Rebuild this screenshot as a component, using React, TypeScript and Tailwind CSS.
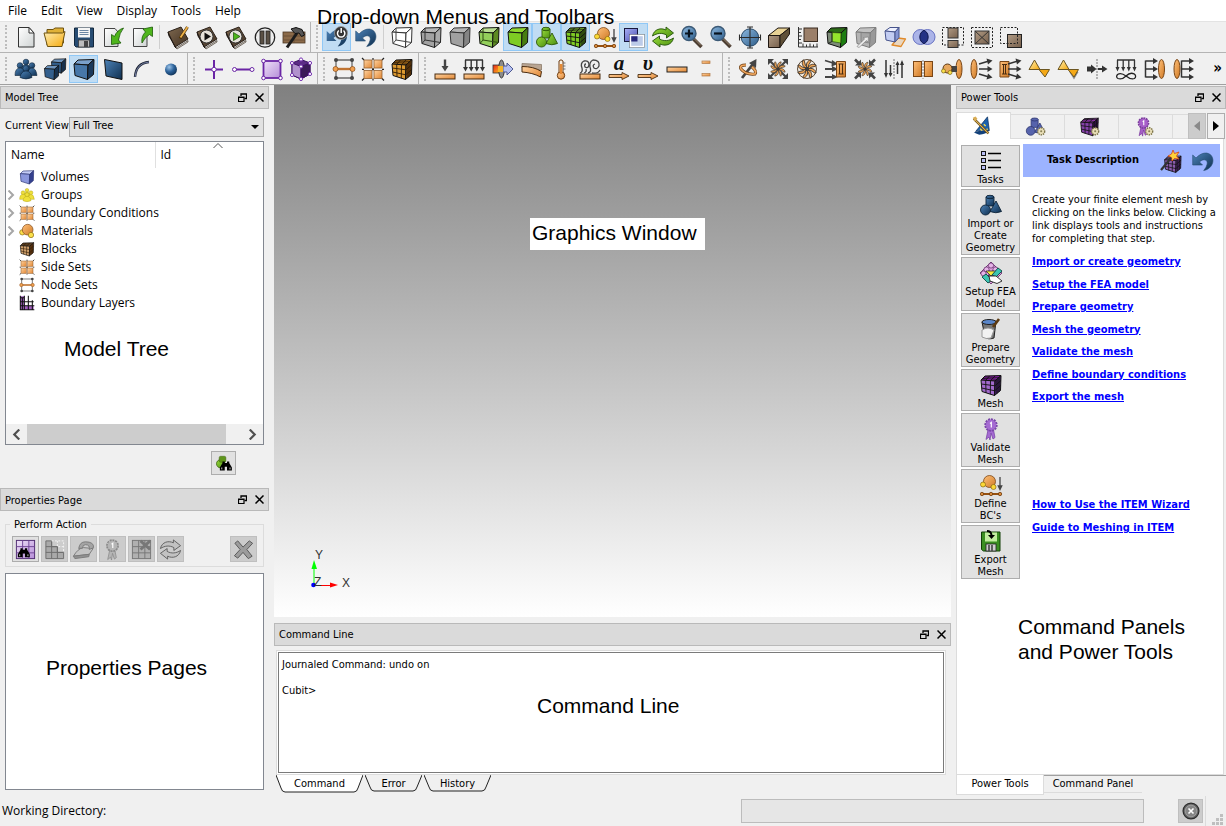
import type { ReactNode } from "react"
import { clsx } from "clsx"

function Cube({ top, front, side, stroke = "#111" }: { top: string; front: string; side: string; stroke?: string }) {
  return (
    <g stroke={stroke} strokeWidth="1" strokeLinejoin="round">
      <path d="M2 7L6 3L22 2.5L16 8z" fill={top} />
      <path d="M2 7L16 8L15.5 22.5L3 18.5z" fill={front} />
      <path d="M16 8L22 2.5L21.5 17.5L15.5 22.5z" fill={side} />
    </g>
  )
}

function MeshLines({ stroke = "#111" }: { stroke?: string }) {
  return (
    <path
      d="M6.7 7.3L7 20M11.5 7.7L11.3 21.3M2.3 11L16 12.8L22 7.5M2.7 15L15.7 17.8L21.7 12.5M18 6.2V20.5M20 4.3V19M3.5 5.5L18 6.2M5 4L20 4.3M10.5 3L6.7 7.3M16 3L11.5 7.7"
      stroke={stroke}
      strokeWidth="0.9"
      fill="none"
    />
  )
}

function Book() {
  return (
    <g strokeLinejoin="round">
      <path d="M2 7L15 2L22 14L9 22z" fill="url(#brown)" stroke="#2b2119" />
      <path d="M2 7L3 11L10 23L9 22" fill="#221a14" stroke="#221a14" />
      <path d="M10 23L22 15.5V17L11 24z" fill="#d8d2c8" stroke="#2b2119" strokeWidth="0.6" />
    </g>
  )
}

function Fan() {
  return (
    <g>
      {[0, 45, 90, 135, 180, 225, 270, 315].map((angle) => (
        <path
          key={angle}
          d="M12 10.5C10.5 7.5 12 3.5 16 3C16.5 5.5 13 6.5 13.3 10.5z"
          transform={`rotate(${angle} 12 12)`}
          fill="#eda354"
          stroke="#40362b"
          strokeWidth="0.9"
        />
      ))}
      <circle cx="12" cy="12" r="2" fill="#3a3a3a" />
    </g>
  )
}

function Gear() {
  return (
    <g>
      <circle cx="18.5" cy="17.5" r="4" fill="#e9dfb8" stroke="#7d7449" strokeWidth="1.6" strokeDasharray="1.6 1" />
      <circle cx="18.5" cy="17.5" r="1.2" fill="#8a8259" />
    </g>
  )
}

function Binoculars() {
  return (
    <g fill="#000">
      <path d="M8 10H11V12H14V10H17V12L20.5 18V22H14V17H11V22H4.5V18L8 12z" />
      <path d="M7 18V20.5M18 18V20.5" stroke="#fff" strokeWidth="1" />
    </g>
  )
}

const undoArrow = "M1.7 6V16H11.5L8.5 13C12 9.5 17 10 16.2 15Q15.5 18.5 12.7 21.5C19 20.5 22.7 15 21.8 10C20.5 3 12 1.500 5 9z"
const ribbon = (fill: string, stroke: string) => (
  <g fill={fill} stroke={stroke}>
    <path d="M9 13L7 22.5L10 20L11 23L12 16L14 22L16 20.5L14.5 13z" strokeWidth="0.8" />
    <circle cx="12" cy="8" r="5.5" strokeWidth="2.4" strokeDasharray="2 0.8" />
    <circle cx="12" cy="8" r="5" stroke="none" />
    <path d="M11 6.5L12.3 5.5V10.5" stroke="#fff" strokeWidth="1.2" fill="none" />
  </g>
)
const refresh = (fill: string, stroke: string) => (
  <g fill={fill} stroke={stroke} strokeWidth="0.9" strokeLinejoin="round">
    <path d="M1.5 11C3 4 10 2.5 15 5V2L22.5 8L15.5 13V10C11 7.5 6 8 1.5 11z" />
    <path d="M22.5 13C21 20 14 21.5 9 19V22L1.5 16L8.5 11V14C13 16.5 18 16 22.5 13z" />
  </g>
)
const boundary = (
  <g>
    <circle cx="10.5" cy="8.5" r="6" fill="url(#amber)" stroke="#7b4514" strokeWidth="0.8" />
    <circle cx="4" cy="11.5" r="2.5" fill="#fbd735" stroke="#8a6a10" strokeWidth="0.7" />
    <circle cx="14.5" cy="14" r="2.5" fill="#fbd735" stroke="#8a6a10" strokeWidth="0.7" />
    <path d="M21 4V15M19.3 13L21 16.5L22.7 13z" stroke="#444" strokeWidth="1.3" fill="#444" />
    <path d="M3 21H21" stroke="#96500f" strokeWidth="2" />
    <g fill="#d98a3a" stroke="#6e3a0a" strokeWidth="0.8">
      <circle cx="3" cy="21" r="1.7" />
      <circle cx="12" cy="21" r="1.7" />
      <circle cx="21" cy="21" r="1.7" />
    </g>
  </g>
)
const shapes = (fill: string, stroke: string) => (
  <g fill={fill} stroke={stroke} strokeWidth="0.9">
    <path d="M7 4v9h8V4z" />
    <ellipse cx="11" cy="4" rx="4" ry="1.7" />
    <path d="M17 8L22.5 18.5Q17 21 11 18.5z" />
    <circle cx="6.5" cy="17" r="5" />
  </g>
)
const sideSet = (
  <g>
    <path d="M1 1L3 3M23 1L21 3M1 23.5L3 21.5M23 23.5L21 21.5M12 1V3M12 21.5V23.5M1 12.300H3M21 12.300H23M11 12.300H13M12 11V13.500" stroke="#222" strokeWidth="1.2" />
    <g fill="url(#orange)" stroke="#94602f" strokeWidth="0.8">
      <rect x="3" y="3" width="8" height="8" />
      <rect x="13" y="3" width="8" height="8" />
      <rect x="3" y="13.5" width="8" height="8" />
      <rect x="13" y="13.5" width="8" height="8" />
    </g>
  </g>
)
const nodeSet = (
  <g>
    <path d="M4 3H20M4 21H20M4 3V21M20 3V21" stroke="#6a6a6a" strokeWidth="1.3" />
    <path d="M3 12H21" stroke="#c07432" strokeWidth="2.4" />
    <g fill="#444">
      <circle cx="4" cy="3" r="2" />
      <circle cx="20" cy="3" r="2" />
      <circle cx="4" cy="21" r="2" />
      <circle cx="20" cy="21" r="2" />
    </g>
    <g fill="#f0a050" stroke="#8a4a12" strokeWidth="0.7">
      <circle cx="3.5" cy="12" r="2.5" />
      <circle cx="20.5" cy="12" r="2.5" />
    </g>
  </g>
)
const people = (fill: string, stroke: string) => (
  <g fill={fill} stroke={stroke} strokeWidth="0.6">
    <circle cx="12" cy="5" r="2.8" />
    <path d="M7 14Q8 7.5 12 7.5T17 14z" />
    <circle cx="6" cy="8.5" r="2.8" />
    <circle cx="18" cy="8.5" r="2.8" />
    <path d="M1 18.5Q1 11 6 11T11 18.5z" />
    <path d="M13 18.5Q14 11 18 11T23 18.5z" />
    <circle cx="12" cy="11.5" r="3" />
    <path d="M6 20.5Q7 14 12 14T18 20.5Q12 23.5 6 20.5z" />
  </g>
)
const plate = <rect x="2" y="17" width="20" height="5" fill="url(#orange)" stroke="#4a2c10" />
const lens = (x: number) => <ellipse cx={x} cy="12" rx="3" ry="9.5" fill="url(#amber)" stroke="#7a4616" />
const magnifier = (sign: string) => (
  <g>
    <path d="M13.5 14L21.5 22" stroke="#4b3d31" strokeWidth="3.6" />
    <path d="M14.5 14L21 20.5" stroke="#9b866f" strokeWidth="1" />
    <circle cx="9" cy="8.5" r="7" fill="url(#sky)" stroke="#3c5a76" strokeWidth="1.4" />
    <path d={sign} stroke="#08131f" strokeWidth="2.2" />
  </g>
)
const outArrows = "M10 7L20 4M10 12H20M10 17L20 20"
const outHeads = "M17.5 1.5L23.5 3.5L19 7.5zM18.5 9L23.5 12L18.5 15zM19 16.5L23.5 20.5L17.5 22.5z"
const motionArrow = (
  <path d="M2 17.5H15V15.5L22 19L15 22.5V20.5H2z" fill="url(#orange)" stroke="#4a2c10" strokeWidth="0.9" />
)

const icons: Record<string, ReactNode> = {
  new: (
    <g stroke="#333" strokeLinejoin="round">
      <path d="M4.5 2.5H15L20 8V22H4.5z" fill="url(#paper)" />
      <path d="M15 2.5V8H20z" fill="#fff" />
    </g>
  ),
  open: (
    <g stroke="#6e5310" strokeLinejoin="round">
      <path d="M4 20V4.5H10L12 3H20.5V18z" fill="#e0b138" />
      <path d="M1 8H19.5L22 6.5L19 21.5H4.5z" fill="url(#gold)" />
    </g>
  ),
  save: (
    <g>
      <path d="M2.5 3H21.5V22H4L2.5 20.5z" fill="#274c73" stroke="#14283d" />
      <rect x="6" y="3" width="12" height="9.5" fill="#f5f5f5" />
      <path d="M7.5 5.5H16.5M7.5 7.5H16.5M7.5 9.5H16.5" stroke="#6b86a3" />
      <rect x="6.5" y="15" width="11" height="7" fill="#bcbcbc" stroke="#333" strokeWidth="0.7" />
      <rect x="12" y="16" width="4" height="6" fill="#444" />
    </g>
  ),
  import: (
    <g strokeLinejoin="round">
      <path d="M3.5 3.5H14L17 7V21.5H3.5z" fill="url(#paper)" stroke="#444" />
      <path d="M22.5 3Q16 5 13.5 11.5L10.5 9.5V19.5L20 18L17.5 15Q18.5 8 22.5 3z" fill="#4fb51c" stroke="#1c5a08" strokeWidth="0.8" />
    </g>
  ),
  export: (
    <g strokeLinejoin="round">
      <path d="M3.5 3.5H14L17 7V21.5H3.5z" fill="url(#paper)" stroke="#444" />
      <path d="M12 18Q11 11 15.5 7L13 4L22.5 2L22.5 11.5L19.5 9.5Q15 12 12 18z" fill="#4fb51c" stroke="#1c5a08" strokeWidth="0.8" />
    </g>
  ),
  journal: (
    <g>
      <Book />
      <path d="M21.5 2L14 13.5" stroke="#4e3205" strokeWidth="3" />
      <path d="M21.5 2L14.5 12.5" stroke="#eeb24a" strokeWidth="1.8" />
    </g>
  ),
  play: (
    <g>
      <Book />
      <circle cx="11.5" cy="11.5" r="6.5" fill="#e6e2da" stroke="#333" />
      <path d="M9.5 7.5L16 11.5L9.5 15.5z" fill="#111" />
    </g>
  ),
  playGreen: (
    <g>
      <Book />
      <circle cx="11.5" cy="11.5" r="6.5" fill="#e6e2da" stroke="#333" />
      <path d="M9.5 7.5L16 11.5L9.5 15.5z" fill="#4db51a" stroke="#184b06" strokeWidth="0.7" />
    </g>
  ),
  pause: (
    <g>
      <circle cx="12" cy="12.5" r="9.7" fill="#eee" stroke="#222" strokeWidth="1.3" />
      <rect x="7" y="6" width="4" height="13" fill="#5a5045" stroke="#222" strokeWidth="0.8" />
      <rect x="13" y="6" width="4" height="13" fill="#5a5045" stroke="#222" strokeWidth="0.8" />
    </g>
  ),
  hammer: (
    <g>
      <rect x="1" y="7" width="22" height="11" fill="#8b6a49" stroke="#4c3825" strokeWidth="0.8" />
      <path d="M1 11H23M12 7V18M1 15H23" stroke="#6b5038" />
      <path d="M15 8L5 22.5" stroke="#1c1c1c" strokeWidth="3" />
      <path d="M9 4L14 2.5L20 4.5L22.5 10L19.5 11.5L17 8L13 8.5z" fill="#555" stroke="#111" />
    </g>
  ),
  undoPower: (
    <g>
      <path d={undoArrow} fill="url(#navy)" />
      <circle cx="16" cy="8" r="6.5" fill="#333" stroke="#999" strokeWidth="0.8" />
      <path d="M13.8 5.5A3.7 3.7 0 1 0 18.5 5.5M16.2 3V8" stroke="#fff" strokeWidth="1.5" fill="none" />
    </g>
  ),
  undo: <path d={undoArrow} fill="url(#navy)" stroke="#234a6f" strokeWidth="0.6" />,
  wire: (
    <g>
      <Cube top="#fff" front="#fff" side="#fff" stroke="#333" />
      <path d="M6 3V15L3 18.5M6 15L21.5 17.5" stroke="#444" fill="none" />
    </g>
  ),
  grayWire: (
    <g>
      <Cube top="#b9b9b9" front="#a2a2a2" side="#ababab" stroke="#222" />
      <path d="M6 3V15L3 18.5M6 15L21.5 17.5" stroke="#333" fill="none" />
    </g>
  ),
  gray: <Cube top="#b4b4b4" front="#a0a0a0" side="#848484" stroke="#333" />,
  greenClear: (
    <g>
      <Cube top="#b9dd91" front="#93cf5b" side="#5d8a22" />
      <path d="M6 3V15L3 18.5M6 15L21.5 17.5" stroke="#2f4d12" fill="none" />
    </g>
  ),
  green: <Cube top="#8fd62f" front="#7ecb23" side="#477d10" />,
  greenShapes: shapes("url(#lime)", "#2d5608"),
  greenMesh: (
    <g>
      <Cube top="#8fd62f" front="#7ecb23" side="#477d10" />
      <MeshLines />
    </g>
  ),
  boundary,
  overlap: (
    <g>
      <rect x="2.5" y="3.5" width="13" height="13" fill="url(#peri)" stroke="#18183c" />
      <rect x="8.5" y="10.5" width="13" height="11" fill="#bccbe8" />
      <rect x="8.5" y="10.5" width="7" height="6" fill="#28287c" />
      <rect x="7.5" y="9.5" width="15" height="13" fill="none" stroke="#666" strokeWidth="0.6" />
      <rect x="8.5" y="10.5" width="13" height="11" fill="none" stroke="#fff" strokeWidth="1.4" />
    </g>
  ),
  refresh: refresh("url(#lime)", "#23520a"),
  zoomIn: magnifier("M9 4.5V12.5M5 8.5H13"),
  zoomOut: magnifier("M5 8.5H13"),
  fit: (
    <g>
      <circle cx="12" cy="12.5" r="8.7" fill="url(#sky)" stroke="#294a69" />
      <path d="M12 2V23M1.5 12.5H22.5M9 2H15M9 23H15M1.5 9.5V15.5M22.5 9.5V15.5" stroke="#2b2b2b" strokeWidth="1.1" />
    </g>
  ),
  wedge: (
    <g stroke="#1e1610" strokeLinejoin="round">
      <path d="M1.5 10.5L11 3H22.5L13 10.5z" fill="#e8d295" />
      <path d="M1.5 10.5H13V22.5H1.5z" fill="url(#brown2)" />
      <path d="M13 10.5L22.5 3V9L13 22.5z" fill="#5f5038" />
    </g>
  ),
  scale: (
    <g>
      <rect x="8" y="3" width="13.5" height="13.5" fill="#9b7f69" stroke="#3a2d22" />
      <path d="M2.5 2V22H22M2.5 4H6M2.5 7.5H5M2.5 11H6M2.5 14.5H5M2.5 18H6M7 22V18.5M10.5 22V19.5M14 22V18.5M17.5 22V19.5M21 22V18.5" stroke="#333" fill="none" />
    </g>
  ),
  greenInner: (
    <g>
      <Cube top="#2c6b17" front="#7c8a76" side="#1c7d10" />
      <path d="M7 7.5L16 8L15.7 18L7 16.5z" fill="#95e32c" stroke="#2b5b0c" strokeWidth="0.7" />
      <path d="M7 16.5L3 18.5M7 7.5V16.5" stroke="#222" strokeWidth="0.9" />
    </g>
  ),
  grayInner: (
    <g>
      <Cube top="#c2c2c2" front="#b3b3b3" side="#999" stroke="#7c7c7c" />
      <path d="M7 7.5L16 8L15.7 18L7 16.5z" fill="#a5a5a5" stroke="#777" strokeWidth="0.7" />
      <path d="M3 21.5L10.5 14L9.5 12.5L14.5 12L14 17L12.5 15.5L5 22.5z" fill="#eee" stroke="#777" strokeWidth="0.6" />
    </g>
  ),
  project: (
    <g strokeLinejoin="round">
      <path d="M15 13L22.5 14L18 21.5L9 20z" fill="#e9d7c1" stroke="#e08a2a" strokeWidth="1.3" />
      <path d="M2 6L7 2.5H16L12 7z" fill="#eef1ff" stroke="#47548c" />
      <path d="M2 6L12 7V17L3 15z" fill="#c3cdf2" stroke="#47548c" />
      <path d="M12 7L16 2.5V12.5L12 17z" fill="#8696d4" stroke="#47548c" />
    </g>
  ),
  venn: (
    <g>
      <circle cx="8.5" cy="12" r="7.5" fill="#9aa5e6" fillOpacity="0.8" stroke="#6671c2" />
      <circle cx="15.5" cy="12" r="7.5" fill="#9aa5e6" fillOpacity="0.8" stroke="#6671c2" />
      <path d="M12 5.3A7.5 7.5 0 0 1 12 18.7A7.5 7.5 0 0 1 12 5.3z" fill="#243285" stroke="#10194c" />
    </g>
  ),
  splitBox: (
    <g>
      <path d="M1.5 2.5H22.5V20H1.5z" fill="none" stroke="#222" strokeDasharray="2 1.5" />
      <rect x="7" y="3" width="10" height="10" fill="url(#brown2)" stroke="#333" />
      <rect x="7" y="15.5" width="10" height="7" fill="url(#brown2)" stroke="#333" />
    </g>
  ),
  crossBox: (
    <g>
      <rect x="1.5" y="2.5" width="21" height="20" fill="none" stroke="#222" strokeDasharray="2 1.5" />
      <rect x="5" y="6" width="14" height="13" fill="url(#brown2)" stroke="#333" />
      <path d="M5 6L19 19M19 6L5 19" stroke="#333" />
    </g>
  ),
  cornerBox: (
    <g>
      <rect x="8.5" y="9.5" width="14" height="13" fill="url(#brown2)" stroke="#222" />
      <rect x="1.5" y="2.5" width="17" height="16" fill="none" stroke="#222" strokeDasharray="2 1.5" />
    </g>
  ),
  group: people("url(#navy)", "#0c2238"),
  bodies: (
    <g>
      <g transform="translate(7 0) scale(0.72)">
        <Cube top="#6e94bd" front="#335f8d" side="#17314e" />
      </g>
      <g transform="translate(0 6.5) scale(0.72)">
        <Cube top="#6e94bd" front="#335f8d" side="#17314e" />
      </g>
    </g>
  ),
  body: <Cube top="#7aa0cb" front="#4777a9" side="#1b3a5d" />,
  surface: <path d="M3.5 2.5L21 6V22.5L5 19z" fill="url(#navy)" stroke="#111" />,
  curve: (
    <g fill="none">
      <path d="M5 20Q6 6 19 5" stroke="#1d2433" strokeWidth="2.4" />
      <path d="M5 20Q6 6 19 5" stroke="#8a95c0" strokeWidth="0.8" />
    </g>
  ),
  vertex: <circle cx="12" cy="12.5" r="6" fill="url(#ball)" />,
  node: (
    <g stroke="#6a25a5">
      <path d="M12 3V22M3 12.5H21" strokeWidth="2" />
      <circle cx="12" cy="12.5" r="2.2" fill="#fff" />
    </g>
  ),
  edge: (
    <g stroke="#6a25a5">
      <path d="M3 12.5H21" strokeWidth="2" />
      <circle cx="3.5" cy="12.5" r="2" fill="#fff" />
      <circle cx="21" cy="12.5" r="2" fill="#fff" />
    </g>
  ),
  face: (
    <g stroke="#6a25a5">
      <rect x="3.5" y="4" width="17" height="17" fill="url(#lilac)" strokeWidth="1.8" />
      <g fill="#fff">
        <circle cx="3.5" cy="4" r="1.8" />
        <circle cx="20.5" cy="4" r="1.8" />
        <circle cx="3.5" cy="21" r="1.8" />
        <circle cx="20.5" cy="21" r="1.8" />
      </g>
    </g>
  ),
  hex: (
    <g stroke="#3c1263">
      <path d="M12 2.5L21 6V17L12 22L3 18V6z" fill="#5c2c86" />
      <path d="M3 6L12 9.5V22L3 18z" fill="#b191cd" />
      <path d="M12 9.5L21 6V17L12 22z" fill="#3c1b58" />
      <g fill="#fff" stroke="#7a35b5">
        <circle cx="12" cy="2.5" r="1.6" />
        <circle cx="21" cy="6" r="1.6" />
        <circle cx="21" cy="17" r="1.6" />
        <circle cx="12" cy="22" r="1.6" />
        <circle cx="3" cy="18" r="1.6" />
        <circle cx="3" cy="6" r="1.6" />
        <circle cx="12" cy="9.5" r="1.6" />
      </g>
    </g>
  ),
  nodeSet,
  sideSet,
  block: (
    <g>
      <Cube top="#b9791f" front="#dd9a30" side="#6e410e" />
      <MeshLines stroke="#2f1b05" />
    </g>
  ),
  blockDark: (
    <g>
      <Cube top="#7a5a38" front="#cfa06c" side="#6e3f16" />
      <MeshLines stroke="#2f1b05" />
    </g>
  ),
  force: (
    <g>
      {plate}
      <path d="M12 2.5V12" stroke="#444" strokeWidth="2.4" />
      <path d="M8.5 9H15.5L12 14.5z" fill="#444" />
    </g>
  ),
  pressure: (
    <g>
      {plate}
      <path d="M3 3H21M3.5 3V12M9.2 3V12M14.8 3V12M20.5 3V12" stroke="#333" strokeWidth="1.4" fill="none" />
      <path d="M1 10H6L3.5 14.5zM6.7 10H11.7L9.2 14.5zM12.3 10H17.3L14.8 14.5zM18 10H23L20.5 14.5z" fill="#333" />
    </g>
  ),
  convection: (
    <g>
      <rect x="2" y="8" width="8" height="8" fill="url(#heat)" stroke="#333" strokeWidth="0.8" />
      <ellipse cx="10.5" cy="12" rx="2.8" ry="9" fill="#8c8c8c" stroke="#333" />
      <path d="M12 9H16V6L22 12L16 18V15H12z" fill="#b3bff0" stroke="#4e5990" />
      <path d="M7 9H12V15H7z" fill="#f5b52a" />
    </g>
  ),
  displace: (
    <g>
      <path d="M2 6.5L21.5 7.5V13L2 11z" fill="#b9a592" stroke="#8a7a6a" strokeWidth="0.8" />
      <path d="M2 9.5C10 9.5 16 11 21.5 14.5L20.5 20C15 17 9 15.5 2 15z" fill="url(#orange)" stroke="#4a2c10" />
    </g>
  ),
  thermo: (
    <g stroke="#6d3b10">
      <path d="M10 16V4Q12 1.5 14 4V16" fill="#f7efe4" />
      <circle cx="12" cy="18.5" r="3.7" fill="url(#orange)" />
      <path d="M12 7V17" stroke="#e58a35" strokeWidth="2.6" />
      <path d="M14 6H16.5M14 9H16.5M14 12H16.5" stroke="#555" strokeWidth="0.8" />
    </g>
  ),
  heatflux: (
    <g>
      {plate}
      <g fill="none" stroke="#444" strokeWidth="1.3">
        <path d="M2 16Q5 15 4 11Q2 6 6 4Q11 3 11 8Q10 12 7 10Q6 7 8 7" />
        <path d="M10 16Q14 15 12 10Q11 5 15 3Q22 3 21 9Q19 13 16 11Q14 8 17 7M14 16Q20 17 22 13M6 16Q9 15 8 12" />
      </g>
    </g>
  ),
  accel: (
    <g>
      <text x="12" y="13" textAnchor="middle" fontFamily="Liberation Serif, serif" fontStyle="italic" fontWeight="bold" fontSize="21" fill="#111">a</text>
      {motionArrow}
    </g>
  ),
  velocity: (
    <g>
      <text x="12" y="13" textAnchor="middle" fontFamily="Liberation Serif, serif" fontStyle="italic" fontWeight="bold" fontSize="21" fill="#111">υ</text>
      {motionArrow}
    </g>
  ),
  plate: <rect x="2" y="10" width="20" height="5" fill="url(#orange)" stroke="#222" />,
  contact: (
    <g fill="url(#orange)" stroke="#b07a48" strokeWidth="0.7">
      <rect x="8" y="4" width="8" height="2.5" />
      <rect x="8" y="16.5" width="8" height="2.5" />
    </g>
  ),
  swirl: (
    <g>
      <path d="M5 21L16 7" stroke="#444" strokeWidth="2.8" />
      <path d="M12 6L19.5 2L19 11z" fill="#444" />
      <g fill="none">
        <path d="M9 8Q2 8 4 12Q9 18 18 17Q20 14 15 10" stroke="#6b3c11" strokeWidth="3" />
        <path d="M9 8Q2 8 4 12Q9 18 18 17Q20 14 15 10" stroke="#f0a860" strokeWidth="1.7" />
      </g>
    </g>
  ),
  fanOut: (
    <g>
      <path d="M4 4L20 20M20 4L4 20" stroke="#444" strokeWidth="2.2" />
      <path d="M2 8V2H8zM22 8V2H16zM2 16V22H8zM22 16V22H16z" fill="#444" />
      <g transform="translate(2.5 2.5) scale(0.79)">
        <Fan />
      </g>
    </g>
  ),
  fan: (
    <g>
      <circle cx="12" cy="12" r="9.5" fill="#f3ece2" stroke="#5b4a38" />
      <Fan />
    </g>
  ),
  inlet: (
    <g>
      <path d="M1 3.5L9 6M1 12H9M1 20H9" stroke="#444" strokeWidth="1.8" />
      <path d="M8 3L14 7L7.5 9.5zM8 9L14 12L8 15zM8 17L14 20L8 22.5z" fill="#444" />
      <path d="M12.5 4.5H21.5V20H12.5z" fill="url(#amber)" stroke="#7a4616" />
      <path d="M15.5 7V17M18.5 7V17M14.5 7H19.5M14.5 17H19.5" stroke="#4a2c10" />
    </g>
  ),
  fanIn: (
    <g>
      <path d="M2 2.5L7 7.5M22 2.5L17 7.5M2 21.5L7 16.5M22 21.5L17 16.5" stroke="#444" strokeWidth="2.6" />
      <path d="M8 2.5V8.5H2zM16 2.5V8.5H22zM8 21.5V15.5H2zM16 21.5V15.5H22z" fill="#444" />
      <g transform="translate(3 3) scale(0.75)">
        <Fan />
      </g>
    </g>
  ),
  shear: (
    <g>
      <path d="M12 2V22" stroke="#777" strokeDasharray="2 1" />
      <path d="M4 3V18M8.5 8V18M15.5 6V17M20 5V21" stroke="#333" strokeWidth="1.5" />
      <path d="M2 16H6L4 21zM6.5 16H10.5L8.5 20zM13.5 8H17.5L15.5 4zM18 8H22L20 3z" fill="#333" />
    </g>
  ),
  symmetry: (
    <g>
      <rect x="2.5" y="4.5" width="8" height="15" fill="url(#amber)" stroke="#7a4616" />
      <rect x="13.5" y="4.5" width="8" height="15" fill="url(#amber)" stroke="#7a4616" />
      <path d="M12 3V22" stroke="#888" strokeDasharray="2 1" />
    </g>
  ),
  nozzle: (
    <g>
      {lens(19)}
      <path d="M9 12H17" stroke="#444" strokeWidth="6" />
      <circle cx="7.5" cy="11.5" r="4.5" fill="#e7a75e" stroke="#5b3816" />
      <circle cx="3.5" cy="14" r="2" fill="#fbe04a" stroke="#7a6410" strokeWidth="0.7" />
      <circle cx="10" cy="15.5" r="2" fill="#fbe04a" stroke="#7a6410" strokeWidth="0.7" />
    </g>
  ),
  lensOut: (
    <g>
      {lens(5)}
      <path d={outArrows} stroke="#333" strokeWidth="1.6" />
      <path d={outHeads} fill="#333" />
    </g>
  ),
  boxOut: (
    <g>
      <path d="M2 4.5H11V20H2z" fill="url(#amber)" stroke="#7a4616" />
      <path d="M4 7.5H9M4 17H9M5.5 7.5V17M7.5 7.5V17" stroke="#4a2c10" fill="none" />
      <path d={outArrows} stroke="#333" strokeWidth="1.6" />
      <path d={outHeads} fill="#333" />
    </g>
  ),
  wave: (
    <g stroke="#6b5520" strokeLinejoin="round">
      <path d="M7.5 3L2 12.5H13z" fill="url(#gold)" />
      <path d="M12 12.5H22.5L18 20z" fill="#f5a916" />
    </g>
  ),
  waveShade: (
    <g strokeLinejoin="round">
      <path d="M3 14L13 14.5L18 22.5L22.5 15z" fill="#888" />
      <g stroke="#6b5520">
        <path d="M7.5 3L2 12.5H13z" fill="url(#gold)" />
        <path d="M12 12.5H22.5L18 20z" fill="#f5a916" />
      </g>
    </g>
  ),
  pass: (
    <g>
      <path d="M12 2V22" stroke="#777" strokeDasharray="2 1" />
      <path d="M2 12H7" stroke="#333" strokeWidth="5" />
      <path d="M13 12H18" stroke="#333" strokeWidth="2" />
      <path d="M6 7.5L11.5 12L6 16.5zM17 8.5L22.5 12L17 15.5z" fill="#333" />
    </g>
  ),
  farField: (
    <g>
      <path d="M3 3H21M3.5 3V12M9.2 3V12M14.8 3V12M20.5 3V12" stroke="#333" strokeWidth="1.3" fill="none" />
      <path d="M1.5 10H5.5L3.5 14.5zM7.2 10H11.2L9.2 14.5zM12.8 10H16.8L14.8 14.5zM18.5 10H22.5L20.5 14.5z" fill="#333" />
      <path d="M12 19Q7 15 3.5 17.5Q1.5 20 4 21.5Q8 23 12 19T20 16.8Q23 19 20.5 21.5Q17 23 12 19z" fill="none" stroke="#222" strokeWidth="1.3" />
    </g>
  ),
  bracketIn: (
    <g>
      <path d="M2.5 3.5V20.5M2.5 4H11M2.5 12H11M2.5 20H11" stroke="#333" strokeWidth="1.5" fill="none" />
      <path d="M10 1L15 4L10 7zM10 9L15 12L10 15zM10 17L15 20L10 23z" fill="#333" />
      {lens(18.5)}
    </g>
  ),
  bracketOut: (
    <g>
      {lens(5)}
      <path d="M9.5 3.5V20.5M9.5 4H18M9.5 12H18M9.5 20H18" stroke="#333" strokeWidth="1.5" fill="none" />
      <path d="M17 1L22 4L17 7zM17 9L22 12L17 15zM17 17L22 20L17 23z" fill="#333" />
    </g>
  ),
  volume: <Cube top="#c4ccf5" front="#8b97dd" side="#34408e" stroke="#2b3374" />,
  groups: people("#efe03a", "#a89a10"),
  material: (
    <g>
      <circle cx="5" cy="14" r="4" fill="#fbe04a" stroke="#8a6a10" />
      <circle cx="13" cy="10" r="8" fill="url(#amber)" stroke="#7b4514" />
      <circle cx="18" cy="18" r="4" fill="#fbe04a" stroke="#8a6a10" />
    </g>
  ),
  layers: (
    <g>
      <path d="M2 2H8V16H22V22H2z" fill="#a35fc0" />
      <path d="M2 1V22H23M8 1V22M14 1V22M2 16H23M2 10H22M2 4H8M20 8V22M5 4V22" stroke="#111" strokeWidth="1.6" fill="none" />
    </g>
  ),
  find: (
    <g>
      <circle cx="7.5" cy="13" r="5.5" fill="url(#lime)" stroke="#365b0b" />
      <rect x="5.5" y="3" width="9" height="8" rx="2" fill="#5f951b" stroke="#365b0b" strokeWidth="0.6" />
      <g transform="translate(2 0)">
        <Binoculars />
      </g>
    </g>
  ),
  meshFind: (
    <g>
      <rect x="2.5" y="2.5" width="19" height="19" fill="url(#lilac)" stroke="#4f2c72" />
      <path d="M9 2.5V21.5M15.5 2.5V21.5M2.5 9H21.5M2.5 15.5H21.5" stroke="#6d4494" />
      <g transform="translate(0.5 3) scale(0.78)">
        <Binoculars />
      </g>
    </g>
  ),
  refine: (
    <g stroke="#6d6d6d">
      <path d="M3 3H9V9H15V15H21.5V21.5H3z" fill="#a9a9a9" />
      <path d="M9 3V21.5M15 9V21.5M3 9H15M3 15H21" fill="none" />
      <path d="M9 3H21.5V15M15 3V9H21.5" fill="none" stroke="#f4f4f4" strokeDasharray="2 1.5" />
    </g>
  ),
  iron: (
    <g stroke="#7b7b7b" strokeLinejoin="round">
      <path d="M1.5 19Q6 11 12 10L22 11L18 17z" fill="#c4c4c4" />
      <path d="M7 11Q8 4 14 4Q23 4 22.5 10L18 12Q19 7 14 7Q11 7 11 10.5z" fill="#a4a4a4" />
      <path d="M1.5 19L3 21.5L17.5 19.5L18 17z" fill="#929292" />
    </g>
  ),
  ribbonGray: ribbon("#b5b5b5", "#8a8a8a"),
  meshDelete: (
    <g stroke="#777">
      <rect x="2.5" y="2.5" width="19" height="19" fill="#b0b0b0" />
      <path d="M9 2.5V21.5M15.5 2.5V21.5M2.5 9H21.5M2.5 15.5H21.5" fill="none" />
      <path d="M11 3L21 12M21 3L11 12" strokeWidth="3" />
    </g>
  ),
  refreshGray: refresh("#c2c2c2", "#555"),
  cross: (
    <path d="M6 3L11.5 9.5L18 3L21.5 5.5L15.5 12L21 19L17 21.5L11.5 15L6 21L2.5 18.5L8.5 12L3 5.5z" fill="#9c9c9c" stroke="#585858" strokeLinejoin="round" />
  ),
  wizard: (
    <g>
      <path d="M3 19Q12 16 20 17Q16 21.5 9 21.5z" fill="#12407a" />
      <path d="M5 18L18 2L20 17Q12 15 5 18z" fill="#1d62ad" stroke="#0d2f5b" strokeWidth="0.8" />
      <path d="M10 15L12 17M14 10L16 12M17 15L18 16" stroke="#f5d94a" strokeWidth="1.6" />
      <path d="M3 4L19 20" stroke="#5c4210" strokeWidth="2.6" />
      <path d="M3 4L19 20" stroke="#e0b65c" strokeWidth="1.2" />
      <path d="M2 3L5 1.5L7 4L4 7z" fill="#d9ad55" />
    </g>
  ),
  shapesGear: (
    <g>
      {shapes("#5663ac", "#2c356f")}
      <Gear />
    </g>
  ),
  meshGear: (
    <g>
      <Cube top="#b03ed1" front="#8440a8" side="#391250" />
      <MeshLines />
      <Gear />
    </g>
  ),
  ribbonGear: (
    <g>
      {ribbon("#a75fc9", "#7a3a9c")}
      <Gear />
    </g>
  ),
  tasks: (
    <g>
      <path d="M9 4.5H22M9 11.5H22M9 18.5H22" stroke="#000" strokeWidth="1.4" />
      <g fill="#b9bff5" stroke="#111">
        <rect x="2.5" y="2.5" width="4" height="4" />
        <rect x="2.5" y="9.5" width="4" height="4" />
        <rect x="2.5" y="16.5" width="4" height="4" />
      </g>
    </g>
  ),
  navyShapes: shapes("url(#navy)", "#0c2238"),
  fea: (
    <g>
      <path d="M12 1L23 12L12 23L1 12z" fill="#dba0dc" stroke="#5b2561" strokeWidth="0.8" />
      <path d="M6.5 6.5L17.5 17.5M17.5 6.5L6.5 17.5" stroke="#5b2561" strokeWidth="1.3" />
      <g fill="#e6b3e8" stroke="#5b2561" strokeWidth="0.7">
        <circle cx="12" cy="4.5" r="2.6" />
        <circle cx="7.5" cy="8.5" r="2.6" />
        <circle cx="4.5" cy="12.5" r="2.6" />
        <circle cx="16.5" cy="8.5" r="2.6" />
      </g>
      <path d="M7 10H17L12 15z" fill="#f7ea3a" stroke="#333" strokeWidth="0.8" />
      <path d="M3 16L7 13L13 19L9 22z" fill="#3dc4b3" stroke="#145850" />
      <path d="M19 7L23 10L17 16L13 14z" fill="#3dc4b3" stroke="#145850" />
      <path d="M10 15H17L23 20L18 22.5L11 20z" fill="#fff" stroke="#222" strokeWidth="0.9" />
    </g>
  ),
  bucket: (
    <g strokeLinejoin="round">
      <path d="M3 5L17 4L15 21Q9 23 6 20z" fill="#777" stroke="#222" />
      <ellipse cx="10" cy="5" rx="7" ry="2.5" fill="#5a86c9" stroke="#222" />
      <path d="M3 13Q9 9 15 13L12 21Q7 22.5 3 20z" fill="#f2f2f2" stroke="#999" />
      <path d="M14 10L20 2" stroke="#5c3a12" strokeWidth="2.6" />
    </g>
  ),
  purpleMesh: (
    <g>
      <Cube top="#9a1fc0" front="#a169cb" side="#3d1a5c" />
      <MeshLines />
    </g>
  ),
  ribbon: ribbon("#a56bd2", "#7b46aa"),
  exportMesh: (
    <g>
      <path d="M2.5 3H21V22H4.5L2.5 20.5z" fill="#3b8f22" stroke="#123f07" />
      <rect x="6" y="3.5" width="12" height="9" fill="#c3eea0" />
      <rect x="7" y="15" width="10" height="7" fill="#d0d0d0" stroke="#222" strokeWidth="0.8" />
      <path d="M13 16V22M10 16V22" stroke="#444" strokeWidth="1.6" />
      <path d="M8 2Q12 2 12.5 6" stroke="#000" strokeWidth="2" fill="none" />
      <path d="M9 6H16L12.5 10z" fill="#000" />
    </g>
  ),
  wandMesh: (
    <g>
      <g transform="translate(4 5) scale(0.82)">
        <Cube top="#b98ad6" front="#8a5cab" side="#4a2466" />
        <MeshLines />
      </g>
      <path d="M14 1L15.5 4.5L20 3L17.5 7L20 10L15.5 9.5L13 12L12.5 8.5L9 7L12.5 5z" fill="#ffd23a" stroke="#d6421a" strokeWidth="0.8" />
      <path d="M12 9L2 21" stroke="#333" strokeWidth="2.2" />
    </g>
  ),
  stop: (
    <g>
      <circle cx="12" cy="12" r="9.5" fill="#666" stroke="#2c2c2c" strokeWidth="1.5" />
      <circle cx="12" cy="12" r="7" fill="#858585" stroke="#b0b0b0" strokeWidth="0.8" />
      <path d="M9 9L15 15M15 9L9 15" stroke="#fff" strokeWidth="2" />
    </g>
  ),
}

function Gradient({ id, from, to }: { id: string; from: string; to: string }) {
  return (
    <linearGradient id={id} x1="0" y1="0" x2="1" y2="1">
      <stop offset="0" stopColor={from} />
      <stop offset="1" stopColor={to} />
    </linearGradient>
  )
}

function Gradients() {
  return (
    <svg className="absolute size-0" aria-hidden="true">
      <defs>
        <Gradient id="paper" from="#ffffff" to="#cfd3d3" />
        <Gradient id="gold" from="#fff0b8" to="#f5a90c" />
        <Gradient id="brown" from="#80694f" to="#3f3023" />
        <Gradient id="brown2" from="#b09a84" to="#77604c" />
        <Gradient id="navy" from="#4d83b8" to="#0f2f4f" />
        <Gradient id="sky" from="#8db9e0" to="#2e5d8a" />
        <Gradient id="lime" from="#9ade3c" to="#4d8f12" />
        <Gradient id="peri" from="#a9b0f5" to="#4b50b0" />
        <Gradient id="orange" from="#ffd3a1" to="#e18632" />
        <Gradient id="amber" from="#ffc07a" to="#cf7a26" />
        <Gradient id="lilac" from="#efe2f8" to="#b58cd8" />
        <Gradient id="heat" from="#e8261b" to="#ffc21a" />
        <radialGradient id="ball" cx="0.35" cy="0.3" r="0.8">
          <stop offset="0" stopColor="#9cc3e8" />
          <stop offset="0.5" stopColor="#2c629a" />
          <stop offset="1" stopColor="#0d2c4d" />
        </radialGradient>
      </defs>
    </svg>
  )
}

function Icon({ name, className = "size-6" }: { name: string; className?: string }) {
  return (
    <svg viewBox="0 0 24 24" className={clsx("shrink-0 overflow-visible", className)} aria-hidden="true">
      {icons[name]}
    </svg>
  )
}

const checked = ["undoPower", "green", "greenShapes", "greenMesh", "overlap", "body"]

function Toolbar({ groups, last }: { groups: string[][]; last?: boolean }) {
  return (
    <div className={clsx("flex shrink-0 items-center", !last && "border-r border-[#b4b4b4] pr-[2px]")}>
      <div className="flex w-[11px] justify-center">
        <div className="h-6 border-l-2 border-dotted border-[#bdbdbd]" />
      </div>
      {groups.map((group, i) => (
        <div key={i} className="flex items-center">
          {i > 0 && <div className="mx-[3px] h-6 w-px bg-[#cfcfcf]" />}
          {group.map((name) => (
            <button
              key={name}
              aria-label={name}
              className={clsx(
                "flex h-7 w-[29px] items-center justify-center border",
                checked.includes(name) ? "border-[#90c8f6] bg-[#c0dcf3]" : "border-transparent"
              )}
            >
              <Icon name={name} />
            </button>
          ))}
        </div>
      ))}
    </div>
  )
}

function DockTitle({ title }: { title: string }) {
  return (
    <div className="flex h-[23px] shrink-0 items-center border border-[#b9b9b9] bg-[#dadada] pl-1">
      <h2 className="flex-1 pt-[2px]">{title}</h2>
      <button aria-label={`Float ${title}`} className="flex h-4 w-[17px] items-center justify-center">
        <svg viewBox="0 0 9 9" className="size-[9px]" fill="none" stroke="#000">
          <path d="M3 3V1H8.5V5.5H6.5M2.5 1H9" strokeWidth="1.3" />
          <path d="M0.5 4H6V8.5H0.5zM0.5 4.3H6" strokeWidth="1.2" />
        </svg>
      </button>
      <button aria-label={`Close ${title}`} className="flex h-4 w-[17px] items-center justify-center">
        <svg viewBox="0 0 9 9" className="size-[9px]" stroke="#000" strokeWidth="1.5">
          <path d="M0.5 0.5L8.5 8.5M8.5 0.5L0.5 8.5" />
        </svg>
      </button>
    </div>
  )
}

function Callout({ className, children }: { className: string; children: ReactNode }) {
  return (
    <p className={clsx("pointer-events-none absolute font-['Liberation_Sans',sans-serif] text-[21px] leading-[25px] whitespace-nowrap", className)}>
      {children}
    </p>
  )
}

const treeItems = [
  { icon: "volume", label: "Volumes" },
  { icon: "groups", label: "Groups", expandable: true },
  { icon: "sideSet", label: "Boundary Conditions", expandable: true },
  { icon: "material", label: "Materials", expandable: true },
  { icon: "blockDark", label: "Blocks" },
  { icon: "sideSet", label: "Side Sets" },
  { icon: "nodeSet", label: "Node Sets" },
  { icon: "layers", label: "Boundary Layers" },
]

function Chevron({ d, className }: { d: string; className: string }) {
  return (
    <svg viewBox="0 0 10 10" className={className} fill="none" stroke="currentColor" strokeWidth="2">
      <path d={d} />
    </svg>
  )
}

function ModelTree() {
  return (
    <section className="relative flex flex-4 flex-col">
      <DockTitle title="Model Tree" />
      <div className="flex h-8 items-center px-[5px] pt-[3px]">
        <label htmlFor="view" className="w-16 whitespace-nowrap">
          Current View
        </label>
        <div className="relative flex-1">
          <select id="view" className="block h-5 w-full appearance-none border border-[#ababab] bg-[#e1e1e1] pl-[3px]">
            <option>Full Tree</option>
          </select>
          <svg viewBox="0 0 8 4" className="pointer-events-none absolute top-2 right-[5px] h-1 w-2">
            <path d="M0 0H8L4 4z" />
          </svg>
        </div>
      </div>
      <div className="mx-[5px] flex min-h-0 flex-1 flex-col border border-[#828790] bg-white">
        <div className="flex-1 overflow-hidden">
          <table className="w-full table-fixed text-left font-['Open_Sans',sans-serif] text-[12px]">
            <thead>
              <tr className="h-[26px]">
                <th className="w-[149px] border-r border-[#e0e0e0] pl-[5px] font-normal">Name</th>
                <th className="relative pl-[5px] font-normal">
                  Id
                  <Chevron d="M0.5 6L5 1.5L9.5 6" className="absolute top-0 left-[57px] size-[10px] stroke-1 text-[#555]" />
                </th>
              </tr>
            </thead>
            <tbody>
              {treeItems.map((item) => (
                <tr key={item.label} className="h-[18px]">
                  <td colSpan={2} className="p-0">
                    <div className="flex h-[18px] items-center">
                      <span className="w-[13px]">
                        {item.expandable && <Chevron d="M2.5 0.5L7 5L2.5 9.5" className="size-[10px] text-[#a6a6a6]" />}
                      </span>
                      <Icon name={item.icon} className="size-4" />
                      <span className="pl-[6px]">{item.label}</span>
                    </div>
                  </td>
                </tr>
              ))}
            </tbody>
          </table>
        </div>
        <div className="flex h-5 items-center bg-[#f0f0f0] text-[#505050]">
          <Chevron d="M7.5 0.5L3 5L7.5 9.5" className="mx-[5px] size-[11px]" />
          <div className="mr-4 h-full flex-1 bg-[#cdcdcd]" />
          <Chevron d="M2.5 0.5L7 5L2.5 9.5" className="mx-[5px] size-[11px]" />
        </div>
      </div>
      <div className="flex h-[43px] items-start justify-end pt-[6px] pr-[33px]">
        <button aria-label="Find" className="flex h-6 w-[25px] items-center justify-center border border-[#adadad] bg-[#e1e1e1]">
          <Icon name="find" className="size-[18px]" />
        </button>
      </div>
      <Callout className="top-[250px] left-16">Model Tree</Callout>
    </section>
  )
}

const actions = ["meshFind", "refine", "iron", "ribbonGray", "meshDelete", "refreshGray"]

function ActionButton({ name, enabled }: { name: string; enabled?: boolean }) {
  return (
    <button
      aria-label={name}
      disabled={!enabled}
      className={clsx("flex h-[26px] w-[27px] items-center justify-center border", enabled ? "border-[#adadad] bg-[#e1e1e1]" : "border-[#bfbfbf] bg-[#cccccc]")}
    >
      <Icon name={name} className="size-[23px]" />
    </button>
  )
}

function PropertiesPage() {
  return (
    <section className="relative flex flex-3 flex-col pb-[6px]">
      <DockTitle title="Properties Page" />
      <fieldset className="mx-[5px] mt-[7px] mb-[6px] border border-[#dcdcdc] px-[6px] pb-1">
        <legend className="ml-[-2px] px-1 leading-[13px]">Perform Action</legend>
        <div className="flex gap-[2px] pt-[5px]">
          {actions.map((name, i) => (
            <ActionButton key={name} name={name} enabled={i === 0} />
          ))}
          <div className="flex-1" />
          <ActionButton name="cross" />
        </div>
      </fieldset>
      <div className="mx-[5px] flex-1 border border-[#828790] bg-white" />
      <Callout className="top-[167px] left-[46px]">Properties Pages</Callout>
    </section>
  )
}

function AxisTriad() {
  return (
    <svg viewBox="0 0 44 44" className="absolute bottom-6 left-8 size-11" fontFamily="Liberation Sans, sans-serif" fontSize="12">
      <path d="M8 36V18" stroke="#0f0" strokeWidth="1" />
      <path d="M8 11L11 20H5.5z" fill="#0f0" />
      <path d="M8 36.5H26" stroke="#f00" />
      <path d="M32 36L24 33.5V38.5z" fill="#f00" />
      <circle cx="7.5" cy="36" r="2.3" fill="#00f" />
      <text x="9" y="10" fill="#333">Y</text>
      <text x="8" y="37" fill="#333">Z</text>
      <text x="36" y="38" fill="#333">X</text>
    </svg>
  )
}

function SlantedTab({ label, width, active }: { label: string; width: number; active?: boolean }) {
  const h = active ? 17 : 16
  return (
    <button className="relative mr-[2px] h-[18px] leading-[18px]" style={{ width }}>
      <svg className="absolute inset-0 size-full" fill={active ? "#fff" : "none"} stroke="#222">
        <path d={`M0 0L5 ${h - 4}Q6 ${h} 9 ${h}H${width - 9}Q${width - 6} ${h} ${width - 5} ${h - 4}L${width} 0`} />
      </svg>
      <span className="absolute inset-0">{label}</span>
    </button>
  )
}

function CommandLine() {
  return (
    <section className="relative mt-[6px]">
      <DockTitle title="Command Line" />
      <div className="mt-[4px] mr-[5px] ml-[2px] border border-[#dcdcdc] bg-white p-px">
        <textarea
          aria-label="Command Line"
          defaultValue={"Journaled Command: undo on\n\nCubit>"}
          className="block h-[121px] w-full resize-none border border-[#7a7a7a] bg-white px-[3px] pt-[5px] leading-[13px] outline-none"
        />
      </div>
      <div className="flex h-[21px] pl-[2px]">
        <SlantedTab label="Command" width={87} active />
        <SlantedTab label="Error" width={57} />
        <SlantedTab label="History" width={67} />
      </div>
      <Callout className="top-[70px] left-[263px]">Command Line</Callout>
    </section>
  )
}

const steps = [
  { icon: "tasks", label: "Tasks" },
  { icon: "navyShapes", label: "Import or Create Geometry" },
  { icon: "fea", label: "Setup FEA Model" },
  { icon: "bucket", label: "Prepare Geometry" },
  { icon: "purpleMesh", label: "Mesh" },
  { icon: "ribbon", label: "Validate Mesh" },
  { icon: "boundary", label: "Define BC's" },
  { icon: "exportMesh", label: "Export Mesh" },
]

const links = [
  "Import or create geometry",
  "Setup the FEA model",
  "Prepare geometry",
  "Mesh the geometry",
  "Validate the mesh",
  "Define boundary conditions",
  "Export the mesh",
]

function TaskLink({ children }: { children: string }) {
  return (
    <a href="#" className="font-bold text-[#0000ff] underline">
      {children}
    </a>
  )
}

function PowerTools() {
  return (
    <section className="relative flex w-[270px] shrink-0 flex-col pt-px">
      <DockTitle title="Power Tools" />
      <div className="mt-[3px] flex h-[27px] items-end">
        <button aria-label="Wizard" className="flex h-[27px] w-[55px] items-center justify-center border border-b-0 border-[#dcdcdc] bg-white pr-1">
          <Icon name="wizard" className="size-[22px]" />
        </button>
        {["shapesGear", "meshGear", "ribbonGear"].map((name) => (
          <button key={name} aria-label={name} className="flex h-[25px] w-[54px] shrink-0 items-center justify-center border-t border-r border-b border-[#dcdcdc] pr-1">
            <Icon name={name} className="size-[21px]" />
          </button>
        ))}
        <div className="h-[25px] flex-1 border-t border-b border-[#dcdcdc]" />
        <button aria-label="Previous tab" disabled className="flex h-[26px] w-[18px] items-center justify-center border border-[#bfbfbf] bg-[#cccccc]">
          <svg viewBox="0 0 6 10" className="h-[10px] w-[6px]" fill="#8a8a8a">
            <path d="M6 0V10L0 5z" />
          </svg>
        </button>
        <button aria-label="Next tab" className="mr-px ml-px flex h-[26px] w-[18px] items-center justify-center border border-[#adadad] bg-[#f0f0f0]">
          <svg viewBox="0 0 6 10" className="h-[10px] w-[6px]">
            <path d="M0 0V10L6 5z" />
          </svg>
        </button>
      </div>
      <div className="mr-[2px] flex flex-1 border border-t-0 border-[#dcdcdc] bg-white pt-[5px] pr-[3px] pl-1">
        <div className="flex w-[59px] flex-col gap-[2px] pt-px">
          {steps.map((step) => (
            <button key={step.label} className="flex flex-col items-center border border-[#adadad] bg-[#e1e1e1] px-px pt-[3px] leading-[12px]">
              <Icon name={step.icon} />
              <span className="pt-px">{step.label}</span>
            </button>
          ))}
        </div>
        <div className="ml-[3px] flex-1">
          <div className="flex h-[33px] items-center bg-[#9cb3ff] pr-[5px] pl-6">
            <h3 className="flex-1 font-bold">Task Description</h3>
            <Icon name="wandMesh" className="mr-2 size-6" />
            <Icon name="undo" />
          </div>
          <div className="pt-4 pl-[9px] leading-[13px]">
            <p>
              Create your finite element mesh by
              <br />
              clicking on the links below. Clicking a
              <br />
              link displays tools and instructions
              <br />
              for completing that step.
            </p>
            <nav className="mt-[10px] flex h-[148px] flex-col items-start justify-between">
              {links.map((link) => (
                <TaskLink key={link}>{link}</TaskLink>
              ))}
            </nav>
            <nav className="mt-[95px] flex flex-col items-start gap-[10px]">
              <TaskLink>How to Use the ITEM Wizard</TaskLink>
              <TaskLink>Guide to Meshing in ITEM</TaskLink>
            </nav>
          </div>
        </div>
      </div>
      <div className="flex h-[21px] items-start">
        <button className="h-5 w-[88px] border border-t-0 border-[#dcdcdc] bg-white">Power Tools</button>
        <button className="h-[18px] w-[98px] border-t border-b border-t-[#a0a0a0] border-b-[#dcdcdc]">Command Panel</button>
        <div className="flex-1 border-t border-[#a0a0a0]" />
      </div>
      <Callout className="top-[529px] left-[62px]">
        Command Panels
        <br />
        and Power Tools
      </Callout>
    </section>
  )
}

export default function App() {
  return (
    <div className="relative flex h-screen flex-col overflow-hidden bg-[#f0f0f0] font-['DejaVu_Sans_Condensed','DejaVu_Sans',sans-serif] text-[11px] text-black">
      <Gradients />
      <nav className="flex h-[21px] shrink-0 items-center gap-[14px] bg-white pl-2 font-['Open_Sans',sans-serif] text-[12px]">
        {["File", "Edit", "View", "Display", "Tools", "Help"].map((item) => (
          <button key={item}>{item}</button>
        ))}
      </nav>
      <div className="flex h-8 shrink-0 border-t border-b border-t-[#e3e3e3] border-b-[#b4b4b4]">
        <Toolbar
          groups={[
            ["new", "open", "save", "import", "export"],
            ["journal", "play", "playGreen", "pause", "hammer"],
          ]}
        />
        <Toolbar
          last
          groups={[
            ["undoPower", "undo"],
            [
              "wire", "grayWire", "gray", "greenClear", "green", "greenShapes", "greenMesh", "boundary",
              "overlap", "refresh", "zoomIn", "zoomOut", "fit", "wedge", "scale", "greenInner",
              "grayInner", "project", "venn", "splitBox", "crossBox", "cornerBox",
            ],
          ]}
        />
      </div>
      <div className="flex h-8 shrink-0 border-b border-[#a0a0a0]">
        <Toolbar groups={[["group", "bodies", "body", "surface", "curve", "vertex"]]} />
        <Toolbar groups={[["node", "edge", "face", "hex"]]} />
        <Toolbar groups={[["nodeSet", "sideSet", "block"]]} />
        <Toolbar groups={[["force", "pressure", "convection", "displace", "thermo", "heatflux", "accel", "velocity", "plate", "contact"]]} />
        <Toolbar
          last
          groups={[
            [
              "swirl", "fanOut", "fan", "inlet", "fanIn", "shear", "symmetry", "nozzle",
              "lensOut", "boxOut", "wave", "waveShade", "pass", "farField", "bracketIn", "bracketOut",
            ],
          ]}
        />
        <button aria-label="More tools" className="ml-auto pr-1 text-[15px] font-bold">
          »
        </button>
      </div>
      <div className="flex min-h-0 flex-1">
        <div className="flex w-[269px] shrink-0 flex-col pt-px">
          <ModelTree />
          <PropertiesPage />
        </div>
        <main className="mr-[5px] ml-[5px] flex min-w-0 flex-1 flex-col">
          <div className="relative flex-1 bg-linear-to-b from-[#808080] to-white">
            <Callout className="top-[133px] left-[256px] bg-white pt-[2px] pr-2 pb-[5px] pl-[2px]">Graphics Window</Callout>
            <AxisTriad />
          </div>
          <CommandLine />
        </main>
        <PowerTools />
      </div>
      <footer className="flex h-[30px] shrink-0 items-center font-['Open_Sans',sans-serif] text-[12px]">
        <span className="flex-1 pl-[2px]">Working Directory:</span>
        <div className="h-6 w-[403px] border border-[#bcbcbc] bg-[#e6e6e6]" />
        <button aria-label="Stop" className="ml-[34px] flex h-6 w-[25px] items-center justify-center border border-[#bfbfbf] bg-[#cccccc]">
          <Icon name="stop" className="size-5" />
        </button>
        <div className="ml-[2px] h-full w-px bg-[#dcdcdc]" />
        <svg viewBox="0 0 12 12" className="mt-4 mr-[2px] ml-[6px] size-3" fill="#bfbfbf">
          <path d="M0 9h3v3H0zM4 9h3v3H4zM8 9h3v3H8zM4 5h3v3H4zM8 5h3v3H8zM8 1h3v3H8z" />
        </svg>
      </footer>
      <Callout className="top-1 left-[317px]">Drop-down Menus and Toolbars</Callout>
    </div>
  )
}
